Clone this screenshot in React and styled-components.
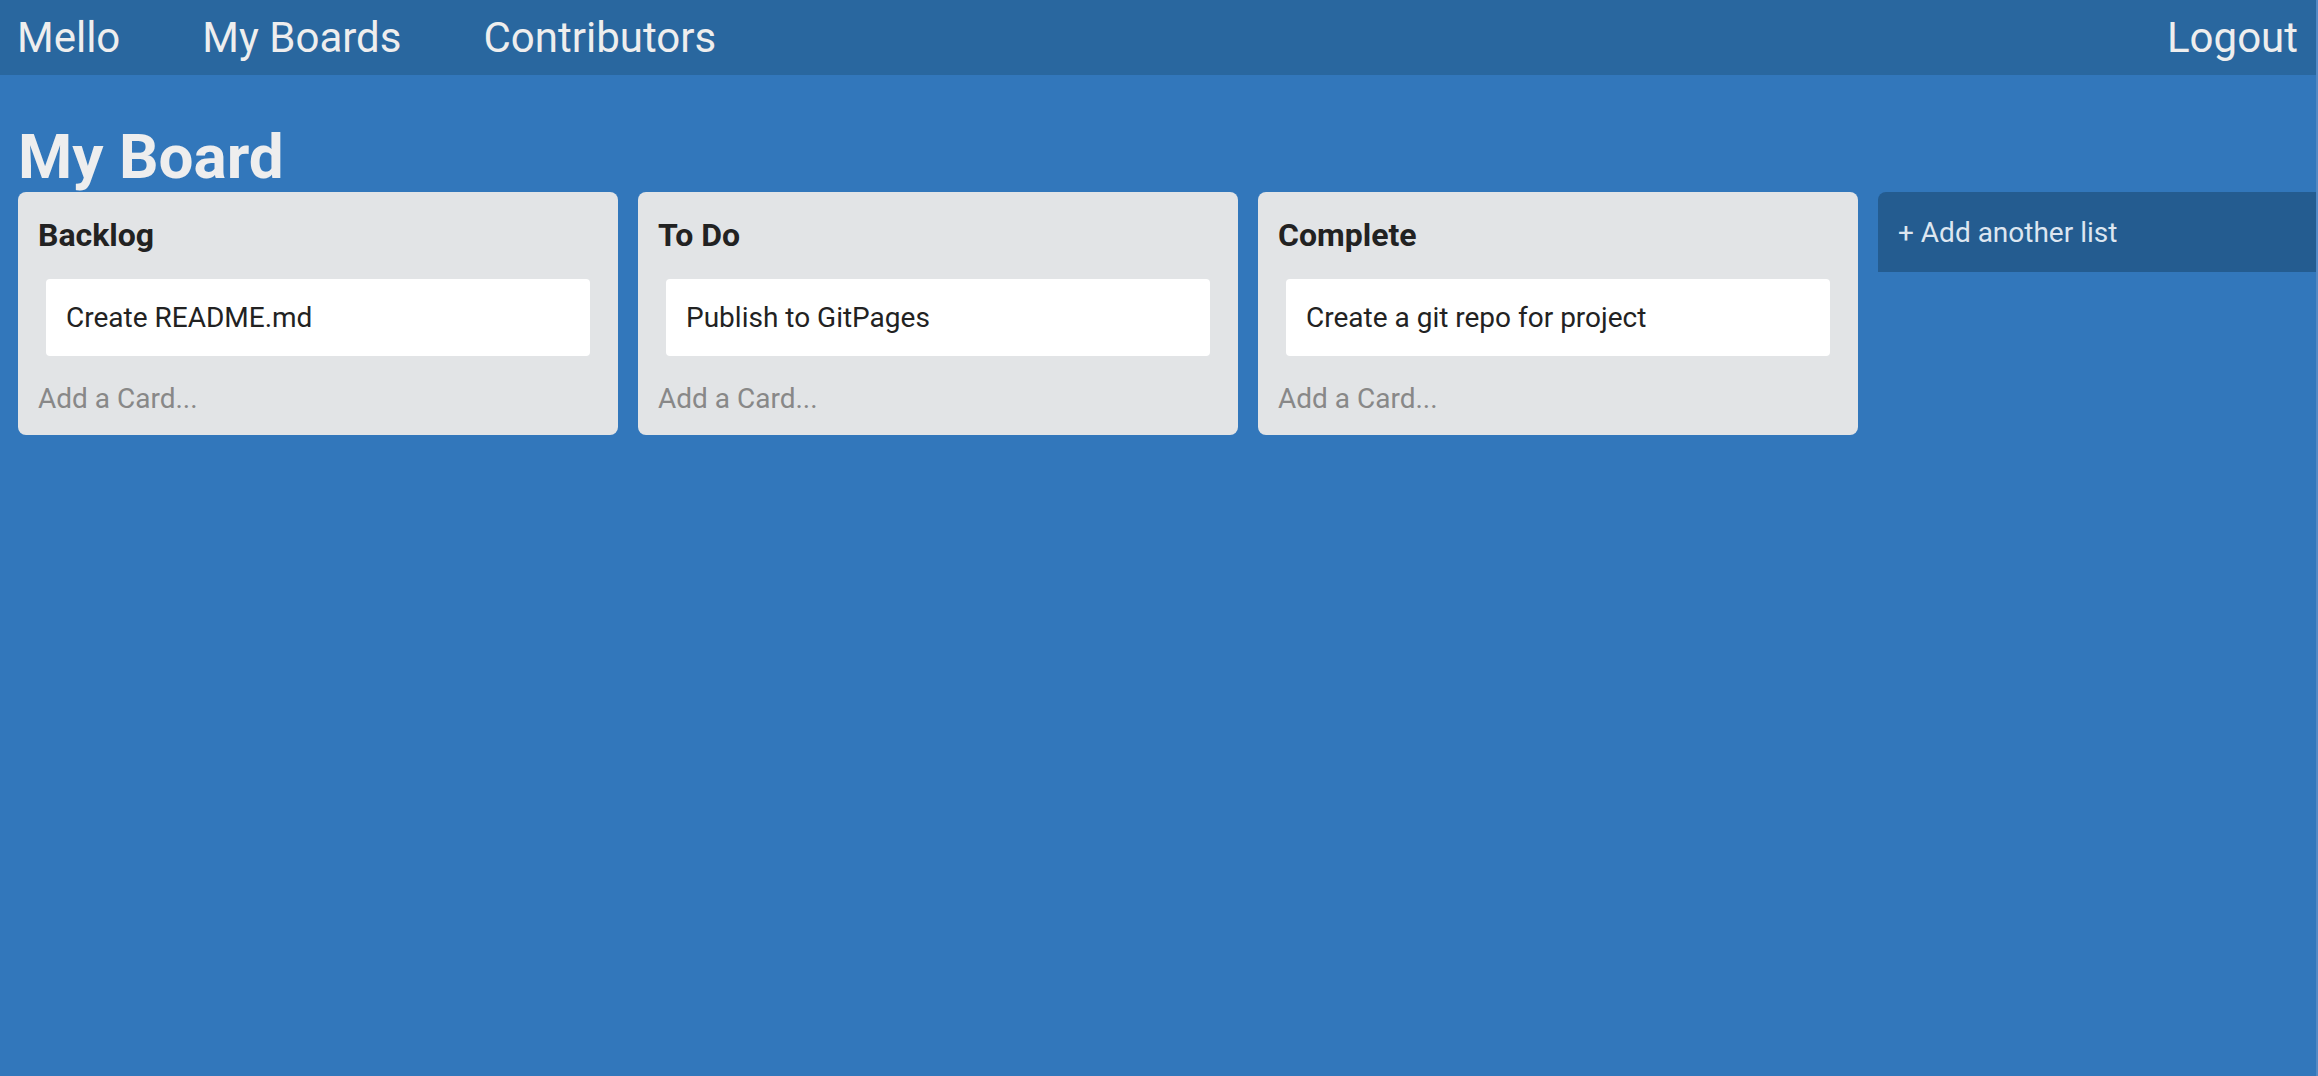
import styled, { createGlobalStyle } from "styled-components";

const Global = createGlobalStyle`
  body {
    margin: 0;
    font-family: Roboto, "Liberation Sans", sans-serif;
    background: #3277bb;
  }
`;

const Page = styled.div`
  min-height: 100vh;
  box-sizing: border-box;
  background: #3277bb;
  border-right: 2px solid #5289c4;
  overflow: hidden;
`;

const Nav = styled.nav`
  display: flex;
  align-items: center;
  height: 75px;
  padding: 0 18px 0 17px;
  background: #29679f;
  gap: 82px;
  a {
    color: #eeeeee;
    font-size: 42px;
    text-decoration: none;
    line-height: 49px;
  }
  .logout {
    margin-left: auto;
  }
`;

const Main = styled.main`
  padding: 0 18px;
  h1 {
    margin: 46px 0 0;
    font-size: 62px;
    font-weight: 700;
    line-height: 71px;
    color: #eeeeee;
  }
`;

const Lists = styled.div`
  display: flex;
  align-items: flex-start;
  gap: 20px;
`;

const List = styled.div`
  flex: 0 0 600px;
  box-sizing: border-box;
  background: #e2e4e6;
  border-radius: 8px;
  padding: 24px 20px 20px;
  h2 {
    margin: 0 0 25px;
    font-size: 32px;
    font-weight: 700;
    line-height: 38px;
    color: #222222;
  }
`;

const Card = styled.div`
  margin: 0 8px;
  background: #ffffff;
  border-radius: 4px;
  padding: 0 20px;
  height: 77px;
  display: flex;
  align-items: center;
  font-size: 28px;
  color: #222222;
`;

const AddCard = styled.div`
  margin-top: 26px;
  font-size: 28px;
  line-height: 33px;
  color: #888888;
`;

const AddList = styled.div`
  flex: 0 0 600px;
  box-sizing: border-box;
  height: 80px;
  display: flex;
  align-items: center;
  padding: 0 20px;
  background: #245c90;
  border-radius: 8px 8px 0 0;
  font-size: 28px;
  color: #dde6f0;
`;

const lists = [
  { title: "Backlog", cards: ["Create README.md"] },
  { title: "To Do", cards: ["Publish to GitPages"] },
  { title: "Complete", cards: ["Create a git repo for project"] },
];

export default function App() {
  return (
    <Page>
      <Global />
      <Nav>
        <a href="#">Mello</a>
        <a href="#">My Boards</a>
        <a href="#">Contributors</a>
        <a href="#" className="logout">Logout</a>
      </Nav>
      <Main>
        <h1>My Board</h1>
        <Lists>
          {lists.map((l) => (
            <List key={l.title}>
              <h2>{l.title}</h2>
              {l.cards.map((c) => (
                <Card key={c}>{c}</Card>
              ))}
              <AddCard>Add a Card...</AddCard>
            </List>
          ))}
          <AddList>+ Add another list</AddList>
        </Lists>
      </Main>
    </Page>
  );
}
